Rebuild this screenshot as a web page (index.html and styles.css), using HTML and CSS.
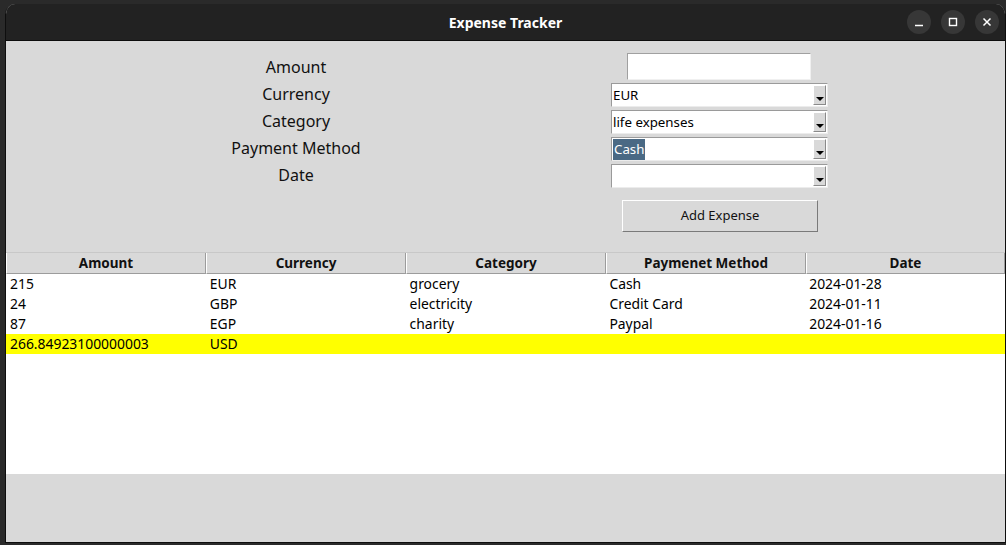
FILE: index.html
```html
<!DOCTYPE html>
<html>
<head>
<meta charset="utf-8">
<link rel="stylesheet" href="styles.css">
</head>
<body>
<div class="window">
  <div class="titlebar">
    <div class="title">Expense Tracker</div>
    <div class="controls">
      <span class="ctl"><svg width="24" height="24" viewBox="0 0 24 24"><path d="M8 15.5h8" stroke="#fff" stroke-width="1.5"/></svg></span>
      <span class="ctl"><svg width="24" height="24" viewBox="0 0 24 24"><rect x="8.5" y="8.5" width="7" height="7" fill="none" stroke="#fff" stroke-width="1.4"/></svg></span>
      <span class="ctl"><svg width="24" height="24" viewBox="0 0 24 24"><path d="M8.5 8.5l7 7M15.5 8.5l-7 7" stroke="#fff" stroke-width="1.5"/></svg></span>
    </div>
  </div>
  <div class="content">
    <div class="form">
      <div class="labels">
        <div class="lbl">Amount</div>
        <div class="lbl">Currency</div>
        <div class="lbl">Category</div>
        <div class="lbl">Payment Method</div>
        <div class="lbl">Date</div>
      </div>
      <div class="inputs">
        <div class="entry"></div>
        <div class="combo"><span class="val">EUR</span><span class="arrow"></span></div>
        <div class="combo"><span class="val">life expenses</span><span class="arrow"></span></div>
        <div class="combo"><span class="val"><span class="sel">Cash</span></span><span class="arrow"></span></div>
        <div class="combo"><span class="val"></span><span class="arrow"></span></div>
        <div class="btn">Add Expense</div>
      </div>
    </div>
    <div class="table">
      <div class="thead">
        <div class="th">Amount</div>
        <div class="th">Currency</div>
        <div class="th">Category</div>
        <div class="th">Paymenet Method</div>
        <div class="th">Date</div>
      </div>
      <div class="tbody">
        <div class="tr"><div class="td">215</div><div class="td">EUR</div><div class="td">grocery</div><div class="td">Cash</div><div class="td">2024-01-28</div></div>
        <div class="tr"><div class="td">24</div><div class="td">GBP</div><div class="td">electricity</div><div class="td">Credit Card</div><div class="td">2024-01-11</div></div>
        <div class="tr"><div class="td">87</div><div class="td">EGP</div><div class="td">charity</div><div class="td">Paypal</div><div class="td">2024-01-16</div></div>
        <div class="tr total"><div class="td">266.84923100000003</div><div class="td">USD</div><div class="td"></div><div class="td"></div><div class="td"></div></div>
      </div>
    </div>
  </div>
</div>
</body>
</html>
```

FILE: styles.css
```css
html, body {
  margin: 0;
  padding: 0;
}
body {
  background: #2a2a2a;
  width: 1006px;
  height: 545px;
  overflow: hidden;
  padding: 4px 0 0 5px;
  box-sizing: border-box;
  font-family: "Noto Sans", "Open Sans", sans-serif;
}
.window {
  width: 1001px;
  height: 539px;
  background: #d9d9d9;
  border: 1px solid #0e0e0e;
  border-top: none;
  border-radius: 10px 10px 0 0;
  box-sizing: border-box;
  display: flex;
  flex-direction: column;
  overflow: hidden;
}
.titlebar {
  height: 37px;
  box-sizing: border-box;
  background: #222222;
  border-bottom: 1px solid #0c0c0c;
  display: flex;
  align-items: center;
  justify-content: center;
  position: relative;
  flex: none;
}
.title {
  color: #ffffff;
  font-weight: bold;
  font-size: 14px;
}
.controls {
  position: absolute;
  right: 6px;
  top: 6px;
  display: flex;
  gap: 10px;
}
.ctl {
  width: 24px;
  height: 24px;
  border-radius: 50%;
  background: #373737;
  display: block;
}
.ctl svg { display: block; }
.content {
  flex: 1;
  display: flex;
  flex-direction: column;
}
.form {
  height: 211px;
  display: flex;
  flex: none;
}
.labels {
  width: 580px;
  padding-top: 15px;
  display: flex;
  flex-direction: column;
  align-items: center;
  box-sizing: border-box;
}
.lbl {
  font-size: 16px;
  color: #111;
  height: 27px;
  line-height: 22px;
  width: 580px;
  text-align: center;
}
.inputs {
  padding-top: 12px;
  padding-left: 25px;
  display: flex;
  flex-direction: column;
  width: 220px;
}
.entry {
  margin-left: 16px;
  width: 184px;
  height: 27px;
  background: #fff;
  border: 1px solid #a0a0a0;
  border-right-color: #f0f0f0;
  border-bottom-color: #f0f0f0;
  box-sizing: border-box;
  margin-bottom: 3px;
}
.combo {
  width: 217px;
  height: 24px;
  background: #fff;
  border: 1px solid #9a9a9a;
  border-right-color: #ececec;
  border-bottom-color: #ececec;
  box-sizing: border-box;
  display: flex;
  margin-bottom: 3px;
  font-size: 13.3px;
  color: #000;
}
.val {
  flex: 1;
  padding-left: 1px;
  line-height: 22px;
}
.sel {
  background: #4a6984;
  color: #fff;
  display: inline-block;
  padding: 0 1px;
  height: 21px;
  line-height: 21px;
}
.arrow {
  width: 13px;
  height: 20px;
  margin: 1px 1px 0 0;
  background: #d9d9d9;
  border: 1px solid #fff;
  border-right-color: #8a8a8a;
  border-bottom-color: #8a8a8a;
  box-sizing: border-box;
  position: relative;
}
.arrow::after {
  content: "";
  position: absolute;
  left: 2px;
  bottom: 3px;
  border-left: 4px solid transparent;
  border-right: 4px solid transparent;
  border-top: 4px solid #000;
}
.btn {
  margin-top: 9px;
  margin-left: 11px;
  width: 196px;
  height: 32px;
  box-sizing: border-box;
  background: #d9d9d9;
  border: 1px solid #fff;
  border-right-color: #7a7a7a;
  border-bottom-color: #7a7a7a;
  font-size: 13px;
  color: #111;
  text-align: center;
  line-height: 29px;
}
.table {
  height: 221px;
  background: #fff;
  border-top: 1px solid #c8c8c8;
  flex: none;
}
.thead {
  display: flex;
  height: 21px;
  background: #d9d9d9;
}
.th {
  width: 200px;
  box-sizing: border-box;
  border-left: 1px solid #fff;
  border-right: 1px solid #9c9c9c;
  border-bottom: 1px solid #9c9c9c;
  font-weight: bold;
  font-size: 13.5px;
  text-align: center;
  line-height: 20px;
  color: #111;
}
.th:last-child { width: 199px; }
.tr {
  display: flex;
  height: 20px;
}
.td {
  width: 200px;
  padding-left: 4px;
  box-sizing: border-box;
  font-size: 13.9px;
  line-height: 20px;
  color: #000;
}
.total { background: #ffff00; }
```
